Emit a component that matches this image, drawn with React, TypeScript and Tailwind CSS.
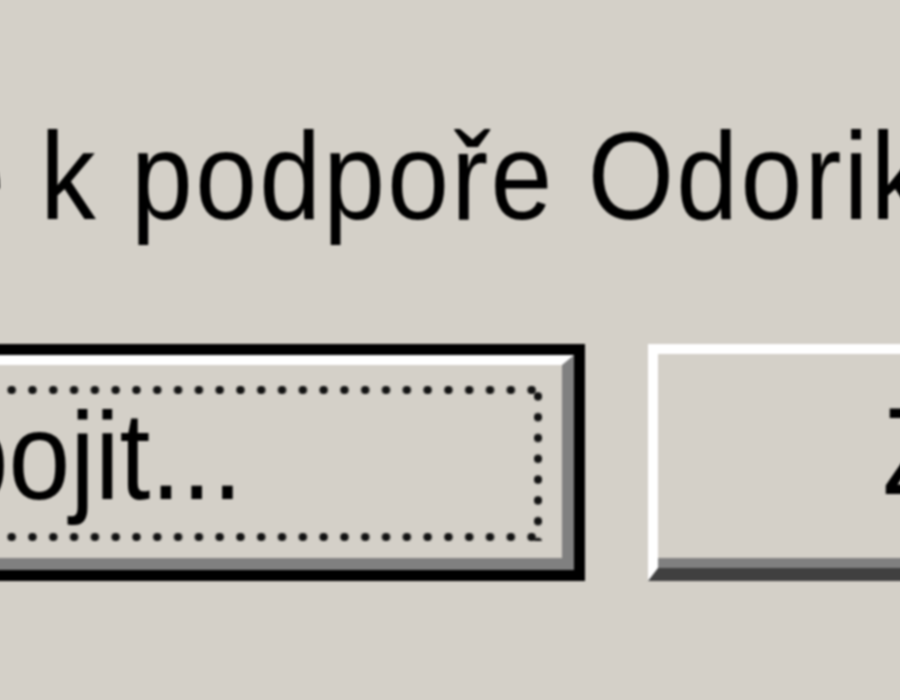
export default function App() {
  return (
    <div className="w-[900px] h-[700px] overflow-hidden bg-[#d4d0c8] text-black font-['Liberation_Sans',Arial,sans-serif]">
      <div className="pt-[126px] blur-[1px]">
        <p className="-ml-[57px] whitespace-nowrap text-[111px] leading-none tracking-[2.3px] origin-[0_94px] scale-y-[1.12]">e k podpoře Odoriku</p>

        <div className="mt-[107px] flex items-start">
          {/* výchozí tlačítko s fokusem */}
          <div className="-ml-[529px] w-[1114px] h-[237px] shrink-0 border-[11px] border-black">
            <div className="relative h-full flex items-center justify-center border-t-[10px] border-l-[10px] border-r-[12px] border-b-[12px] border-t-white border-l-white border-r-[#808080] border-b-[#808080]">
              <span className="whitespace-nowrap text-[111px] leading-none origin-[0_94px] scale-y-[1.12]">Připojit...</span>
              <div className="absolute top-[21px] bottom-[17px] left-[20px] right-[20px]">
                <div className="absolute top-0 left-0 right-0 h-[8px] bg-[radial-gradient(circle,#111_3.5px,transparent_5px)] bg-[length:20.8px_8px] bg-repeat-x bg-right-top" />
                <div className="absolute bottom-0 left-0 right-0 h-[8px] bg-[radial-gradient(circle,#111_3.5px,transparent_5px)] bg-[length:20.8px_8px] bg-repeat-x bg-right-top" />
                <div className="absolute top-0 bottom-0 right-0 w-[8px] bg-[radial-gradient(circle,#111_3.5px,transparent_5px)] bg-[length:8px_20.8px] bg-repeat-y bg-right-top" />
              </div>
            </div>
          </div>

          <div className="ml-[63px] w-[764px] h-[237px] shrink-0 border-t-[10px] border-l-[10px] border-r-[12px] border-b-[13px] border-t-white border-l-white border-r-[#404040] border-b-[#404040]">
            <div className="h-full flex items-center justify-center border-r-[10px] border-b-[10px] border-r-[#808080] border-b-[#808080]">
              <span className="whitespace-nowrap text-[111px] leading-none origin-[0_94px] scale-y-[1.12]">Zavřít</span>
            </div>
          </div>
        </div>
      </div>
    </div>
  )
}
